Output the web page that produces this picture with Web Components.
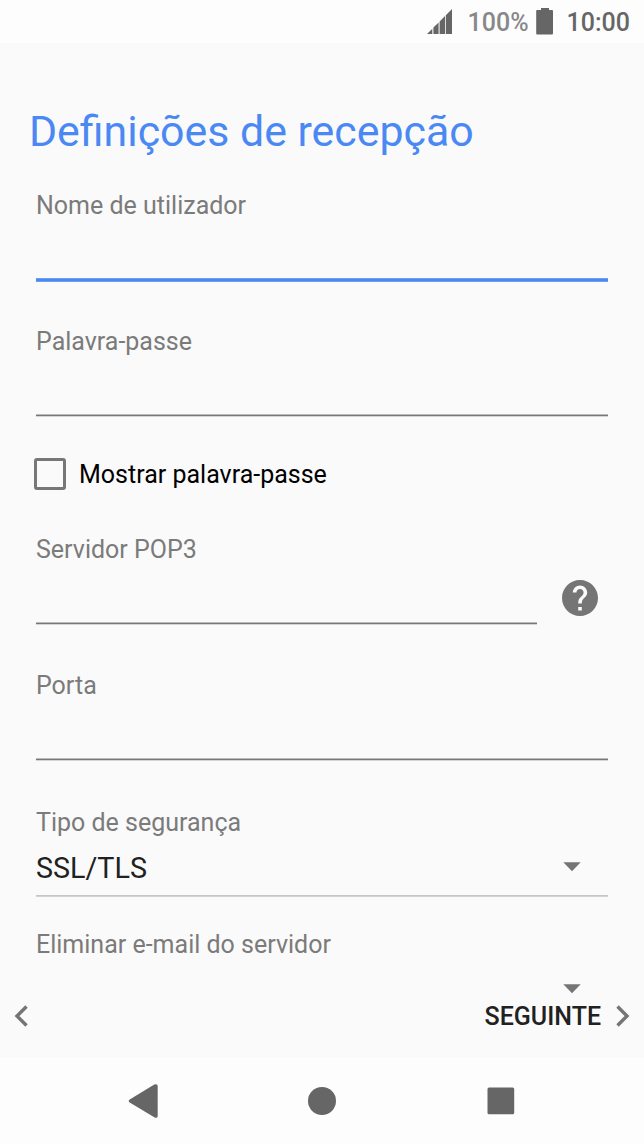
<!DOCTYPE html>
<html lang="pt">
<head>
<meta charset="utf-8">
<title>Definições de recepção</title>
<style>
body{margin:0;background:#fafafa;font-family:Roboto,"Liberation Sans",sans-serif}
</style>
</head>
<body>
<mail-setup></mail-setup>
<script>
const define=(name,html)=>customElements.define(name,class extends HTMLElement{
  constructor(){
    super();
    this.attachShadow({mode:'open'}).innerHTML=html;
  }
});

define('status-bar',`<style>
:host{display:flex;height:43px;box-sizing:border-box;background:#fdfdfd;color:#666;font-size:25px;line-height:30px;font-weight:500;padding:8px 14px 0 0;justify-content:flex-end}
svg{display:block;fill:#666}
.signal{margin:1px 15px 0 0}
.level{color:#888;margin-right:7px}
.battery{margin-right:13px}
</style>
<svg class="signal" width="26" height="26" viewBox="0 0 26 26"><path d="M0 25 5.300 19.700V25ZM6.400 25V18.600L11.600 13.400V25ZM12.600 25V12.400L18 7V25ZM18.800 25V6.200L25 0V25Z"/></svg>
<span class="level">100%</span>
<svg class="battery" width="18" height="27" viewBox="0 0 18 27"><path d="M5 0H13V2H16Q17 2 17 3V25.500Q17 26.500 16 26.500H1Q.2 26.500 .2 25.500V3Q.2 2 1 2H5Z"/></svg>
<span>10:00</span>`);

define('form-field',`<style>
:host{display:flex;flex-direction:column;flex-shrink:0;box-sizing:border-box;padding-top:1px;color:#7b7b7b;font-size:25px;line-height:30px}
.value{flex:1;display:flex;color:#212121;font-size:28.700px;line-height:34px;padding:13px 27px 0 0}
.value slot{display:block;flex:1}
:host(:not([select]):not([open-end])) .value{padding:0}
.rule{height:3px;background:linear-gradient(#bbb 1px,#777 1px,#777 2px,#d4d4d4 2px)}
:host([active]) .rule{height:4px;background:linear-gradient(#6b9ff4 1px,#4a89f3 1px,#4a89f3 3px,#6b9ff4 3px)}
:host([select]) .rule{height:2px;background:linear-gradient(#c5c5c5 1px,#d2d2d2 1px)}
:host([open-end]) .rule{display:none}
svg{display:none}
:host([select]) svg,:host([open-end]) svg{display:block;margin-top:11px;fill:#757575}
</style>
<slot name="label"></slot>
<div class="value"><slot></slot><svg width="18" height="10" viewBox="0 0 18 10"><path d="M.3.300H17.700L9 9.300Z"/></svg></div>
<div class="rule"></div>`);

define('check-row',`<style>
:host{display:flex;flex-shrink:0;height:32px;align-items:center;color:#000;font-size:25px;line-height:30px;gap:13px}
i{width:32px;height:32px;box-sizing:border-box;border:3.500px solid #777;border-radius:3px}
span{padding-top:2px}
</style><i></i><span><slot></slot></span>`);

define('help-icon',`<style>:host,svg{display:block}</style>
<svg width="36" height="36" viewBox="2 2 20 20"><path fill="#757575" d="M12 2C6.480 2 2 6.480 2 12s4.480 10 10 10 10-4.480 10-10S17.520 2 12 2zm1 17h-2v-2h2v2zm2.070-7.750l-.9.920C13.450 12.900 13 13.500 13 15h-2v-.5c0-1.100.450-2.100 1.170-2.830l1.240-1.260c.370-.360.590-.860.590-1.410 0-1.100-.9-2-2-2s-2 .9-2 2H8c0-2.210 1.790-4 4-4s4 1.790 4 4c0 .880-.360 1.680-.930 2.250z"/></svg>`);

define('wizard-bar',`<style>
:host{display:flex;flex-shrink:0;justify-content:space-between;align-items:center;height:42px;padding:0 14px;font-size:25px;line-height:30px;font-weight:500;color:#212121}
svg{display:block;fill:none;stroke:#757575;stroke-width:3.400}
.next{display:flex;align-items:center;gap:15px}
span{padding-top:2px}
</style>
<svg width="14" height="22" viewBox="0 0 14 22"><path d="M12.500 1.500 3 11l9.500 9.500"/></svg>
<div class="next"><span><slot></slot></span><svg width="14" height="22" viewBox="0 0 14 22"><path d="M1.500 1.500 11 11 1.500 20.500"/></svg></div>`);

define('nav-bar',`<style>
:host{display:flex;flex-shrink:0;align-items:center;height:86px;box-sizing:border-box;background:#fdfdfd;padding-left:128px}
svg{display:block;fill:#666}
.home{margin-left:149px}.recent{margin-left:151px}
</style>
<svg width="31" height="36" viewBox="0 0 31 36"><path d="M1.300 16.800 26.300 1.500Q29.700.300 29.700 3.200V33Q29.700 35.700 26.700 34.400L1.300 19.300Q0 18 1.300 16.800Z"/></svg>
<svg class="home" width="28" height="28" viewBox="0 0 28 28"><circle cx="14" cy="14" r="14"/></svg>
<svg class="recent" width="28" height="28" viewBox="0 0 28 28"><rect x=".500" y=".500" width="26.700" height="26.700" rx="1.500"/></svg>`);

define('mail-setup',`<style>
:host{display:flex;flex-direction:column;height:1144px;overflow:hidden;background:#fafafa}
status-bar,h1{flex-shrink:0}
h1{margin:63px 0 0 29px;height:50px;font-weight:400;font-size:42.850px;line-height:50px;color:#4a89f3;white-space:nowrap}
main{margin:34px 36px 0;display:flex;flex-direction:column;flex:1;min-height:0}
.user{height:92px}
.pass{height:91px;margin-top:44px}
check-row{margin:41px 0 0 -2px}
.server{display:flex;flex-shrink:0;justify-content:space-between;margin-top:44px;height:91px;padding-right:10.500px}
.server form-field{width:501px}
help-icon{margin-top:46px}
.port{height:91px;margin-top:45px}
.type{height:90px;margin-top:46px}
.remove{height:66px;margin-top:32px}
footer{flex-shrink:0;padding-bottom:21px}
</style>
<status-bar></status-bar>
<h1>Definições de recepção</h1>
<main>
<form-field class="user" active><span slot="label">Nome de utilizador</span></form-field>
<form-field class="pass"><span slot="label">Palavra-passe</span></form-field>
<check-row>Mostrar palavra-passe</check-row>
<div class="server"><form-field><span slot="label">Servidor POP3</span></form-field><help-icon></help-icon></div>
<form-field class="port"><span slot="label">Porta</span></form-field>
<form-field class="type" select><span slot="label">Tipo de segurança</span>SSL/TLS</form-field>
<form-field class="remove" open-end><span slot="label">Eliminar e-mail do servidor</span></form-field>
</main>
<footer><wizard-bar>SEGUINTE</wizard-bar></footer>
<nav-bar></nav-bar>`);
</script>
</body>
</html>
